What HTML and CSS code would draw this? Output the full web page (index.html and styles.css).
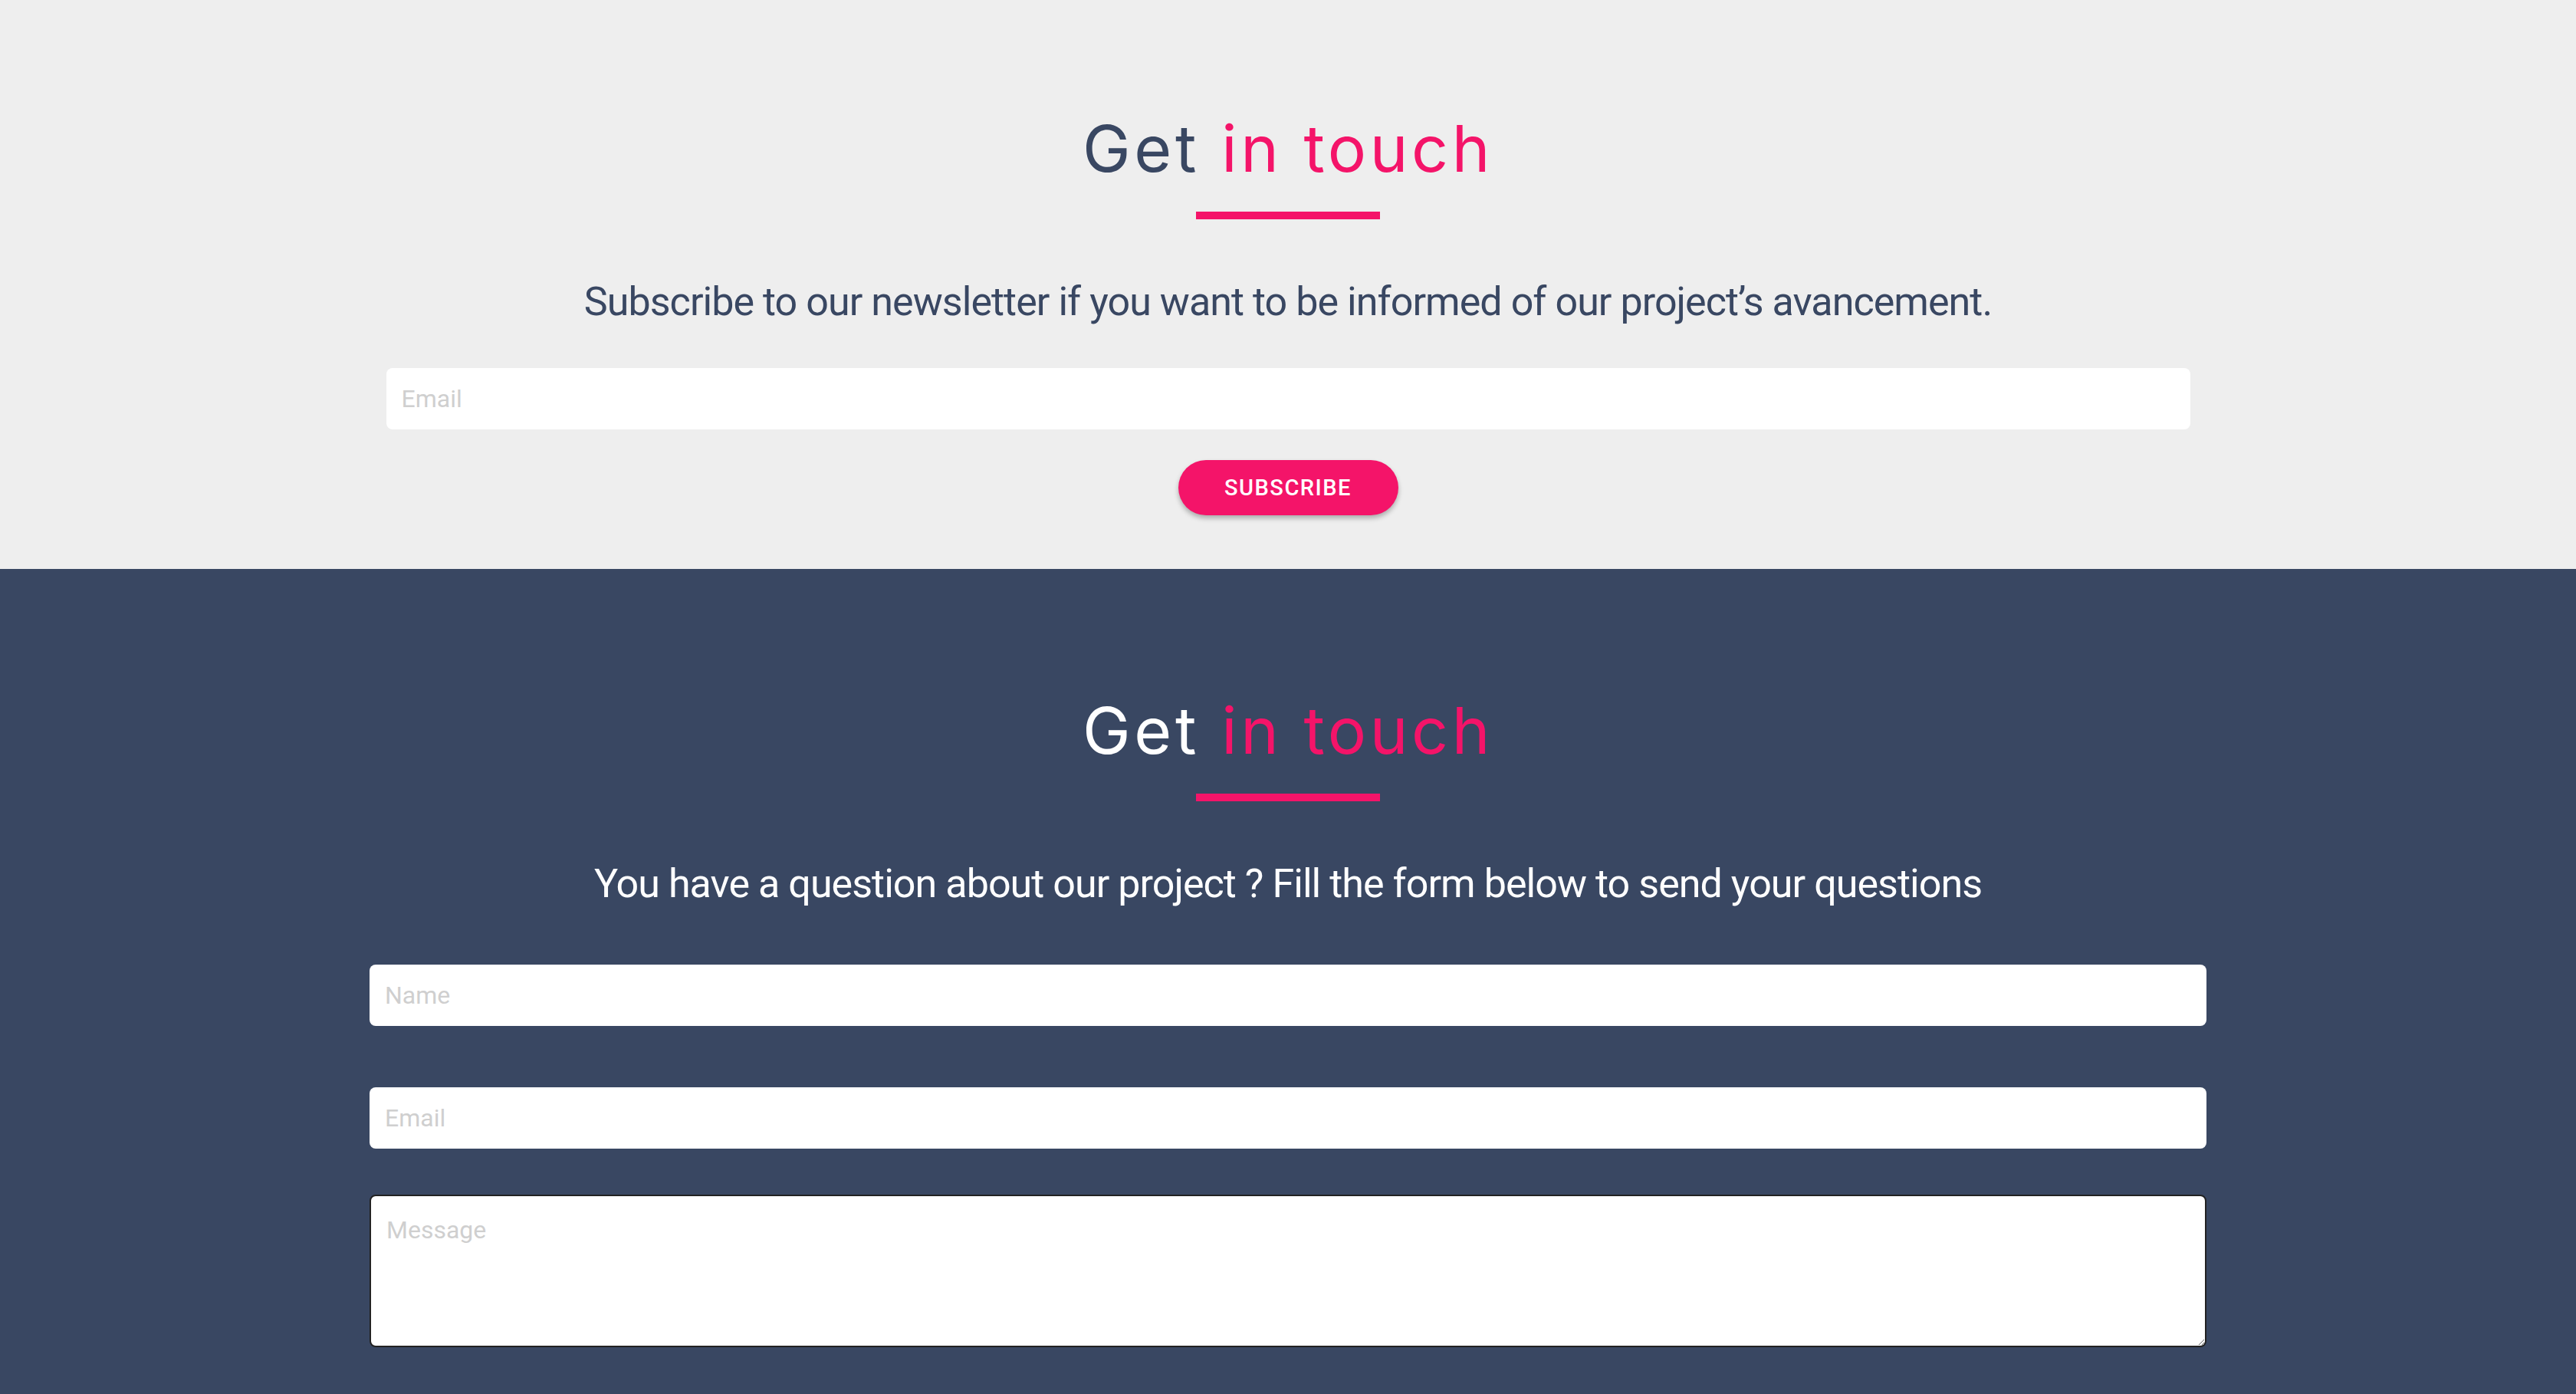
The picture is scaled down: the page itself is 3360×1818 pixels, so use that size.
FILE: index.html
```html
<!DOCTYPE html>
<html lang="en">
<head>
<meta charset="utf-8">
<title>Get in touch</title>
<link rel="stylesheet" href="styles.css">
</head>
<body>
<section class="newsletter">
  <h2 class="title">Get <span class="accent">in touch</span></h2>
  <div class="bar"></div>
  <p class="lead">Subscribe to our newsletter if you want to be informed of our project’s avancement.</p>
  <form class="subscribe-form">
    <input class="field field-wide" type="email" placeholder="Email">
    <button class="btn" type="button">SUBSCRIBE</button>
  </form>
</section>
<section class="contact">
  <h2 class="title title-light">Get <span class="accent">in touch</span></h2>
  <div class="bar"></div>
  <p class="lead lead-light">You have a question about our project ? Fill the form below to send your questions</p>
  <form class="contact-form">
    <input class="field" type="text" placeholder="Name">
    <input class="field" type="email" placeholder="Email">
    <textarea class="field message" placeholder="Message"></textarea>
  </form>
</section>
</body>
</html>
```

FILE: styles.css
```css
* { box-sizing: border-box; }
body {
  margin: 0;
  font-family: Roboto, "Liberation Sans", sans-serif;
}
.newsletter {
  background: #eeeeee;
  height: 742px;
  padding-top: 144px;
  display: flex;
  flex-direction: column;
  align-items: center;
}
.contact {
  background: #394762;
  min-height: 1076px;
  padding-top: 161px;
  display: flex;
  flex-direction: column;
  align-items: center;
}
.title {
  margin: 0;
  font-family: Inter, "Noto Sans", sans-serif;
  font-weight: 400;
  font-size: 84px;
  line-height: 1.2;
  color: #394762;
  letter-spacing: 4.6px;
}
.title-light { color: #ffffff; }
.accent { color: #f41469; }
.bar {
  width: 240px;
  height: 10px;
  background: #f41469;
  margin-top: 31px;
}
.lead {
  margin: 77px 0 0;
  font-size: 52px;
  line-height: 1.2;
  letter-spacing: -0.95px;
  color: #394762;
}
.lead-light { color: #ffffff; }
.subscribe-form {
  margin-top: 55px;
  display: flex;
  flex-direction: column;
  align-items: center;
}
.field {
  display: block;
  height: 80px;
  border: 0;
  border-radius: 8px;
  background: #ffffff;
  padding: 0 20px;
  font-family: Roboto, sans-serif;
  font-size: 32px;
  color: #333;
  outline: none;
}
.field::placeholder { color: #cfcfcf; }
.field-wide { width: 2353px; }
.btn {
  margin-top: 40px;
  width: 287px;
  height: 72px;
  border: 0;
  border-radius: 36px;
  background: #f41469;
  color: #ffffff;
  font-family: Roboto, sans-serif;
  font-weight: 500;
  font-size: 29px;
  letter-spacing: 1.5px;
  box-shadow: 0 4px 6px rgba(0, 0, 0, 0.28);
}
.contact-form {
  margin-top: 74px;
  width: 2396px;
  display: flex;
  flex-direction: column;
}
.contact-form .field { width: 100%; }
.contact-form .field + .field { margin-top: 80px; }
.contact-form .message {
  margin-top: 60px !important;
  height: 199px;
  border: 2px solid #222222;
  padding: 25px 20px;
  resize: vertical;
  line-height: normal;
}
```
